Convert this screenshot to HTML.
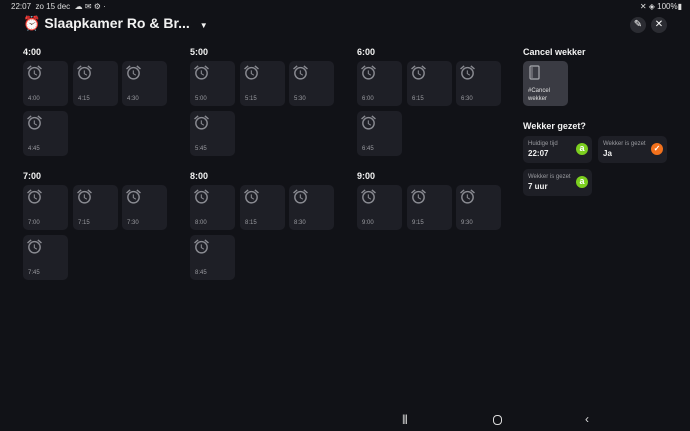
<!DOCTYPE html>
<html><head><meta charset="utf-8"><style>
*{margin:0;padding:0;box-sizing:border-box}
body{width:690px;height:431px;background:#111217;font-family:"Liberation Sans",sans-serif;color:#e6e6e8;position:relative;overflow:hidden}
.a{position:absolute}
.t{position:absolute;width:45px;height:45px;background:#1e1f26;border-radius:5px}
.t svg{position:absolute;left:3px;top:3px}
.t span{position:absolute;left:5px;top:35px;font-size:6px;color:#9a9ba0}
.h{position:absolute;font-size:9px;font-weight:bold;color:#f2f2f2}
.c{position:absolute;width:69px;height:27px;background:#1e1f26;border-radius:5px}
.c .l{position:absolute;left:5px;top:5px;font-size:6px;color:#9a9ba0}
.c .v{position:absolute;left:5px;top:13px;font-size:8px;font-weight:bold;color:#f0f0f0}
.c .b{position:absolute;left:53px;top:7px;width:12px;height:12px;border-radius:50%;font-size:9px;font-weight:bold;color:#fff;text-align:center;line-height:11px}
.btn{position:absolute;width:16px;height:16px;border-radius:50%;background:#2b2c32;color:#fff;text-align:center;font-size:10px;line-height:16px}
</style></head><body>
<svg width="0" height="0" style="position:absolute"><defs><symbol id="clk" viewBox="0 0 24 24"><path fill="#8a8b92" d="M12 4a9 9 0 1 0 0 18 9 9 0 0 0 0-18zm0 16a7 7 0 1 1 0-14 7 7 0 0 1 0 14zm.5-11H11v5l4 2.4.7-1.2-3.2-1.9zM7.9 3.4 6.6 2 1.5 6.3l1.3 1.5zM22.5 6.3 17.4 2l-1.3 1.5 5.1 4.3z"/></symbol></defs></svg>
<div class="a" style="left:11px;top:2px;font-size:8px;color:#ddd">22:07 &nbsp;zo 15 dec &nbsp;☁ ✉ ⚙ ·</div>
<div class="a" style="right:8px;top:2px;font-size:8px;color:#ddd">✕ ◈ 100%▮</div>
<div class="a" style="left:23px;top:15px;font-size:14px;font-weight:bold;color:#f2f2f2">⏰ Slaapkamer Ro &amp; Br... <span style="font-size:8px;margin-left:6px">▼</span></div>
<div class="btn" style="left:630px;top:17px">✎</div>
<div class="btn" style="left:651px;top:17px">✕</div>

<div class="h" style="left:23px;top:47px">4:00</div>
<div class="h" style="left:190px;top:47px">5:00</div>
<div class="h" style="left:357px;top:47px">6:00</div>
<div class="h" style="left:23px;top:171px">7:00</div>
<div class="h" style="left:190px;top:171px">8:00</div>
<div class="h" style="left:357px;top:171px">9:00</div>

<div class="t" style="left:23px;top:61px"><svg width="17" height="17"><use href="#clk"/></svg><span>4:00</span></div>
<div class="t" style="left:73px;top:61px"><svg width="17" height="17"><use href="#clk"/></svg><span>4:15</span></div>
<div class="t" style="left:122px;top:61px"><svg width="17" height="17"><use href="#clk"/></svg><span>4:30</span></div>
<div class="t" style="left:23px;top:111px"><svg width="17" height="17"><use href="#clk"/></svg><span>4:45</span></div>
<div class="t" style="left:190px;top:61px"><svg width="17" height="17"><use href="#clk"/></svg><span>5:00</span></div>
<div class="t" style="left:240px;top:61px"><svg width="17" height="17"><use href="#clk"/></svg><span>5:15</span></div>
<div class="t" style="left:289px;top:61px"><svg width="17" height="17"><use href="#clk"/></svg><span>5:30</span></div>
<div class="t" style="left:190px;top:111px"><svg width="17" height="17"><use href="#clk"/></svg><span>5:45</span></div>
<div class="t" style="left:357px;top:61px"><svg width="17" height="17"><use href="#clk"/></svg><span>6:00</span></div>
<div class="t" style="left:407px;top:61px"><svg width="17" height="17"><use href="#clk"/></svg><span>6:15</span></div>
<div class="t" style="left:456px;top:61px"><svg width="17" height="17"><use href="#clk"/></svg><span>6:30</span></div>
<div class="t" style="left:357px;top:111px"><svg width="17" height="17"><use href="#clk"/></svg><span>6:45</span></div>

<div class="t" style="left:23px;top:185px"><svg width="17" height="17"><use href="#clk"/></svg><span>7:00</span></div>
<div class="t" style="left:73px;top:185px"><svg width="17" height="17"><use href="#clk"/></svg><span>7:15</span></div>
<div class="t" style="left:122px;top:185px"><svg width="17" height="17"><use href="#clk"/></svg><span>7:30</span></div>
<div class="t" style="left:23px;top:235px"><svg width="17" height="17"><use href="#clk"/></svg><span>7:45</span></div>
<div class="t" style="left:190px;top:185px"><svg width="17" height="17"><use href="#clk"/></svg><span>8:00</span></div>
<div class="t" style="left:240px;top:185px"><svg width="17" height="17"><use href="#clk"/></svg><span>8:15</span></div>
<div class="t" style="left:289px;top:185px"><svg width="17" height="17"><use href="#clk"/></svg><span>8:30</span></div>
<div class="t" style="left:190px;top:235px"><svg width="17" height="17"><use href="#clk"/></svg><span>8:45</span></div>
<div class="t" style="left:357px;top:185px"><svg width="17" height="17"><use href="#clk"/></svg><span>9:00</span></div>
<div class="t" style="left:407px;top:185px"><svg width="17" height="17"><use href="#clk"/></svg><span>9:15</span></div>
<div class="t" style="left:456px;top:185px"><svg width="17" height="17"><use href="#clk"/></svg><span>9:30</span></div>

<div class="h" style="left:523px;top:47px">Cancel wekker</div>
<div class="t" style="left:523px;top:61px;background:#3a3b43"><svg width="14" height="16" viewBox="0 0 14 16" style="left:5px;top:4px"><rect x="2" y="1" width="9" height="13" rx="1" fill="none" stroke="#a8a9ae" stroke-width="1.2"/><line x1="4" y1="2" x2="4" y2="13" stroke="#a8a9ae" stroke-width="0.8"/></svg><span style="top:26px;color:#e0e0e0;line-height:8px">#Cancel<br>wekker</span></div>

<div class="h" style="left:523px;top:121px">Wekker gezet?</div>
<div class="c" style="left:523px;top:136px"><div class="l">Huidige tijd</div><div class="v">22:07</div><div class="b" style="background:#7ccf1f">a</div></div>
<div class="c" style="left:598px;top:136px"><div class="l">Wekker is gezet</div><div class="v">Ja</div><div class="b" style="background:#f2711c;font-size:8px">✓</div></div>
<div class="c" style="left:523px;top:169px"><div class="l">Wekker is gezet</div><div class="v">7 uur</div><div class="b" style="background:#7ccf1f">a</div></div>

<div class="a" style="left:402px;top:414px;font-size:10px;color:#ddd;letter-spacing:-1px">|||</div>
<div class="a" style="left:493px;top:415px;width:9px;height:10px;border:1.5px solid #ddd;border-radius:4px"></div>
<div class="a" style="left:585px;top:412px;font-size:12px;color:#ddd">‹</div>
</body></html>
